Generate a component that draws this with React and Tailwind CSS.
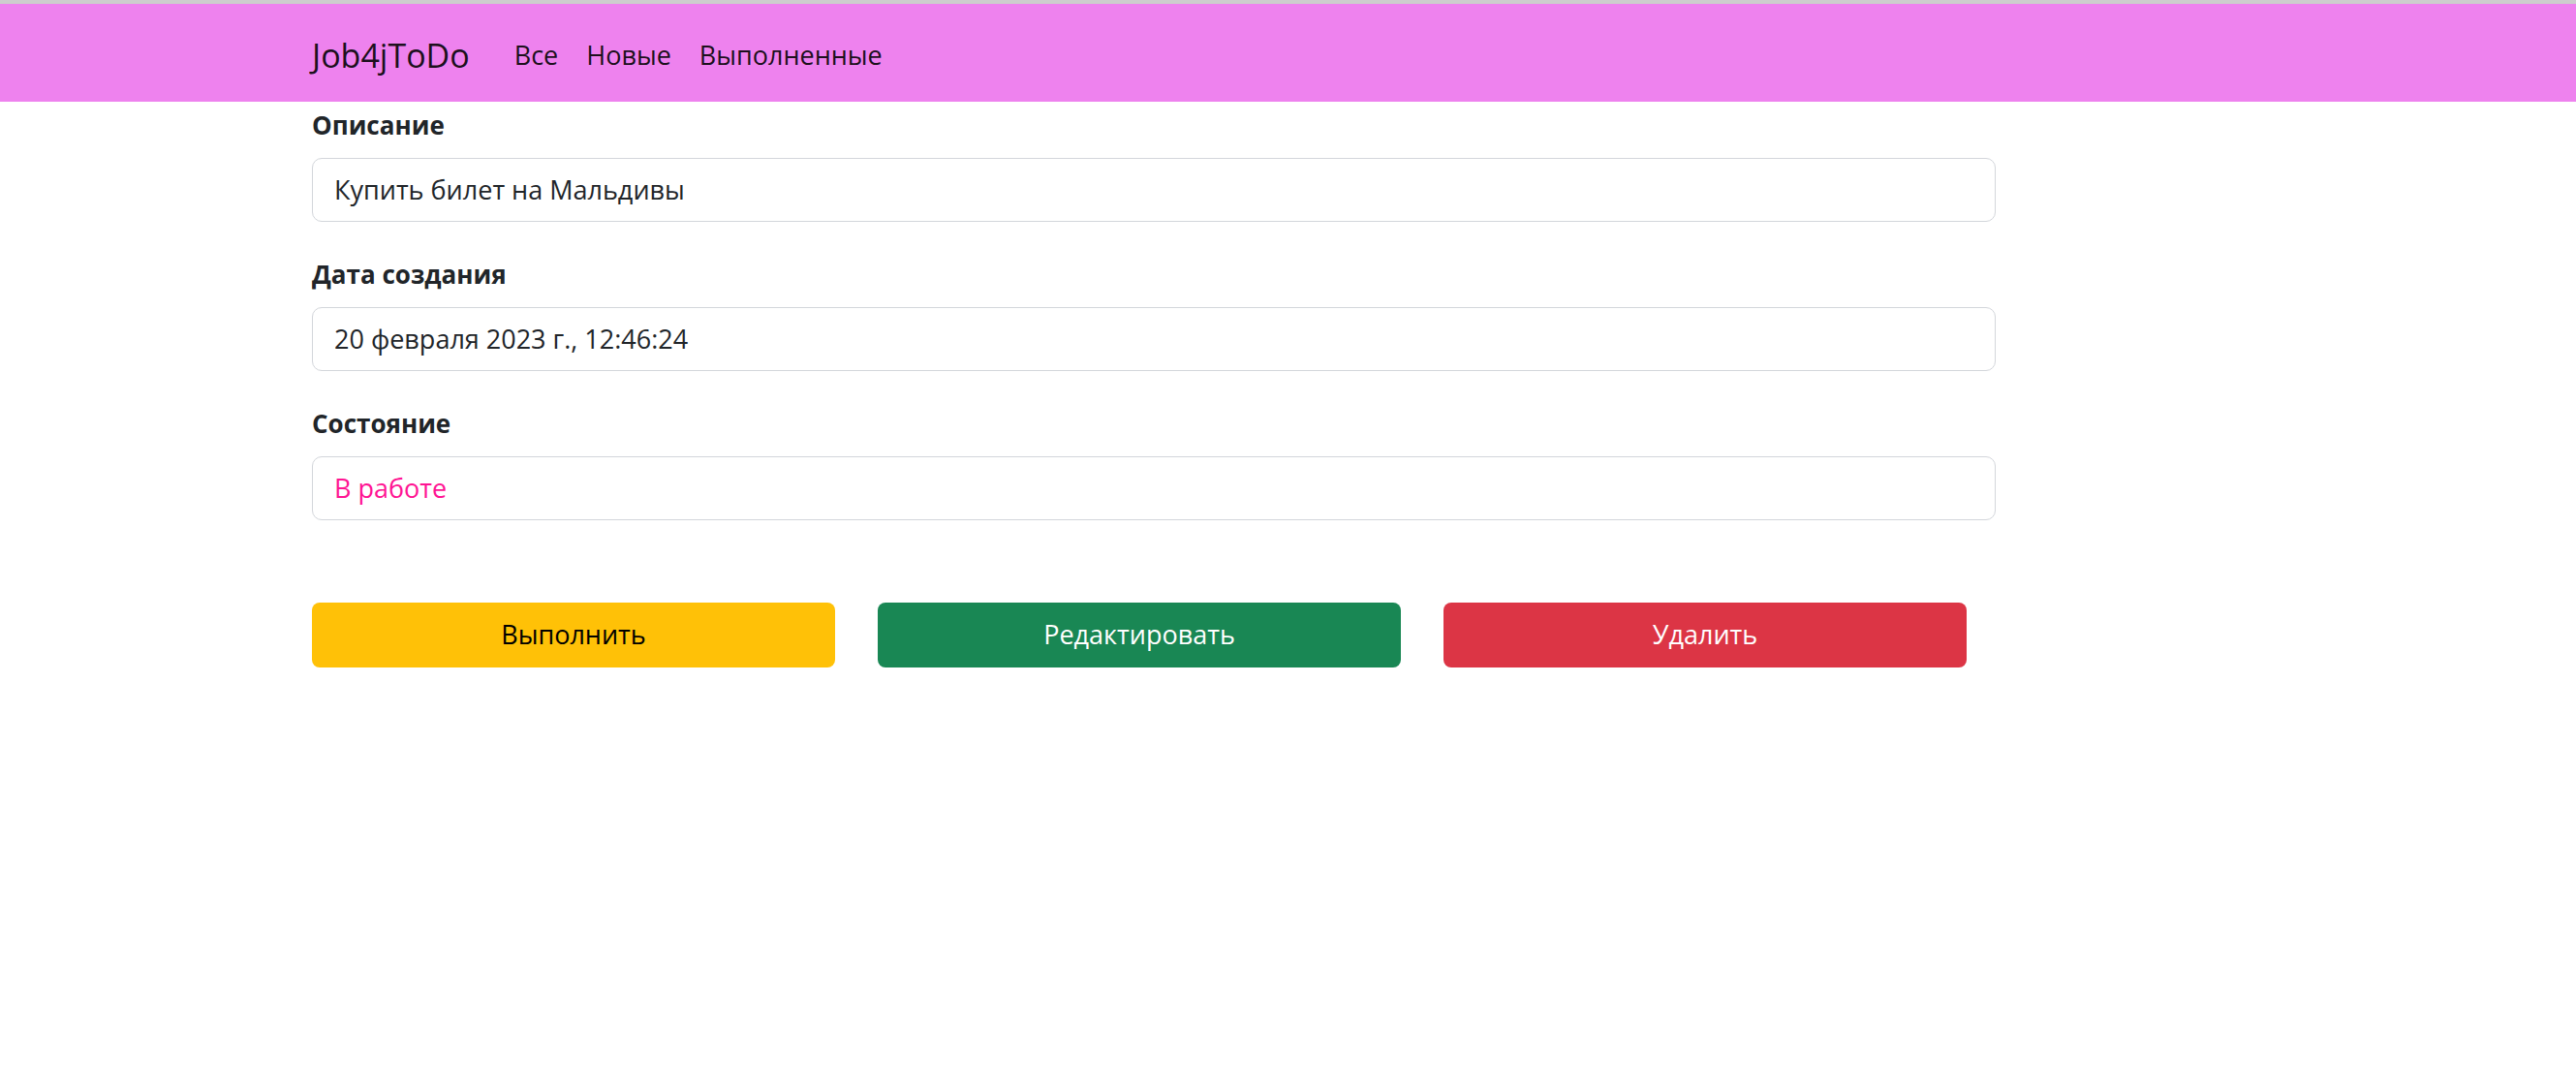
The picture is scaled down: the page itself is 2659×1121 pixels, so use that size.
import React from 'react';

const fields = [
  { label: 'Описание', value: 'Купить билет на Мальдивы', color: 'text-[#212529]' },
  { label: 'Дата создания', value: '20 февраля 2023 г., 12:46:24', color: 'text-[#212529]' },
  { label: 'Состояние', value: 'В работе', color: 'text-[#ff1493]' },
];

export default function App() {
  return (
    <div className="min-h-screen bg-white font-['Open_Sans',sans-serif]">
      <div className="h-[4px] bg-[#cdcdcd]" />

      {/* Navbar */}
      <nav className="h-[101px] bg-[#ee82ee] flex items-center pl-[322px] pt-[6px] text-black/90">
        <a className="text-[34px]">Job4jToDo</a>
        <div className="flex ml-[46px] gap-[29px] text-[27px]">
          <a>Все</a>
          <a>Новые</a>
          <a>Выполненные</a>
        </div>
      </nav>

      <main className="pl-[322px] pt-[5px] w-[2060px]">
        {fields.map((f, i) => (
          <div key={f.label} className={i === 0 ? '' : 'mt-[35px]'}>
            <div className="text-[26px] leading-[39px] font-bold text-[#212529]">{f.label}</div>
            <div
              className={`mt-[14px] h-[66px] border border-[#d3d6db] rounded-[10px] px-[22px] flex items-center text-[27px] ${f.color}`}
            >
              {f.value}
            </div>
          </div>
        ))}

        {/* Actions */}
        <div className="mt-[85px] flex gap-[44px]">
          <button className="w-[540px] h-[67px] rounded-[8px] bg-[#ffc107] text-black text-[27px]">
            Выполнить
          </button>
          <button className="w-[540px] h-[67px] rounded-[8px] bg-[#198754] text-white text-[27px]">
            Редактировать
          </button>
          <button className="w-[540px] h-[67px] rounded-[8px] bg-[#dc3545] text-white text-[27px]">
            Удалить
          </button>
        </div>
      </main>
    </div>
  );
}
